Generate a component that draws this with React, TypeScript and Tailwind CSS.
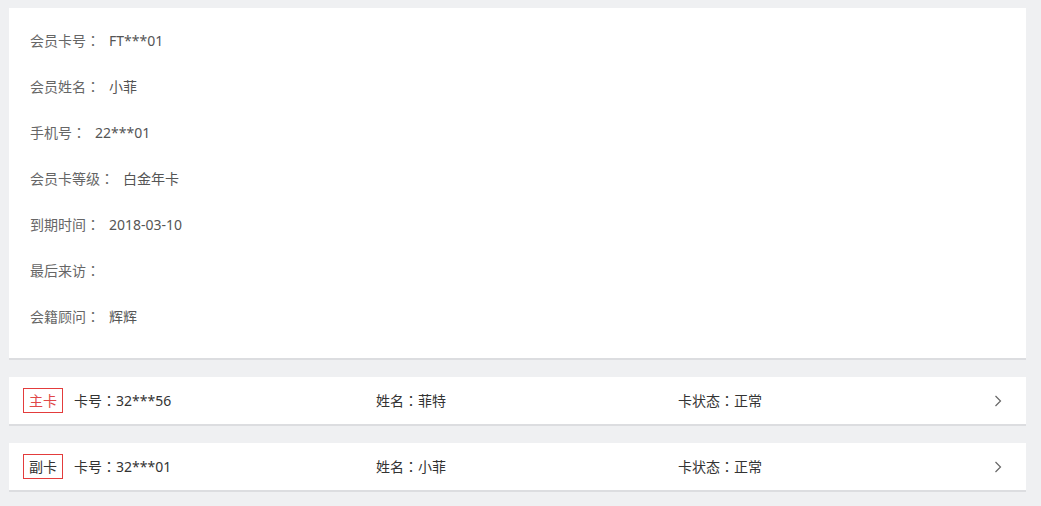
const info = [
  { label: "会员卡号", value: "FT***01" },
  { label: "会员姓名", value: "小菲" },
  { label: "手机号", value: "22***01" },
  { label: "会员卡等级", value: "白金年卡" },
  { label: "到期时间", value: "2018-03-10" },
  { label: "最后来访", value: "" },
  { label: "会籍顾问", value: "辉辉" },
];

const cards = [
  { type: "主卡", primary: true, no: "32***56", name: "菲特", status: "正常" },
  { type: "副卡", primary: false, no: "32***01", name: "小菲", status: "正常" },
];

// full-width colon, centered like the original font renders it
const Colon = () => <span style={{ fontFamily: '"Noto Sans CJK TC", sans-serif' }}>：</span>;

const Chevron = () => (
  <svg width="8" height="12" viewBox="0 0 8 12" className="text-[#666]">
    <polyline points="1.5,1 6.5,6 1.5,11" fill="none" stroke="currentColor" strokeWidth="1.2" />
  </svg>
);

export default function App() {
  return (
    <div
      className="min-h-[506px] w-[1041px] bg-[#eff0f2] pt-[8px] pl-[9px] pr-[15px] text-[14px]"
      style={{ fontFamily: '"Noto Sans", "Noto Sans CJK SC", sans-serif' }}
    >
      <div className="bg-white border-b-2 border-[#dcdde0] pl-[21px] pt-[9px] pb-[19px]">
        {info.map((row) => (
          <div key={row.label} className="flex h-[46px] items-center">
            <span className="text-[#666]">
              {row.label}
              <Colon />
            </span>
            <span className="ml-[9px] text-[#555]">{row.value}</span>
          </div>
        ))}
      </div>

      {cards.map((c) => (
        <div
          key={c.type}
          className="mt-[17px] flex h-[49px] items-center bg-white border-b-2 border-[#dcdde0] pl-[14px] pr-[24px] text-[#333]"
        >
          <span
            className={`flex h-[25px] items-center justify-center border border-[#e33c3c] px-[5px] leading-none ${
              c.primary ? "text-[#e04848]" : "text-[#333]"
            }`}
          >
            {c.type}
          </span>
          <span className="ml-[11px] w-[302px]">
            卡号<Colon />
            {c.no}
          </span>
          <span className="w-[302px]">
            姓名<Colon />
            {c.name}
          </span>
          <span className="flex-1">
            卡状态<Colon />
            {c.status}
          </span>
          <Chevron />
        </div>
      ))}
    </div>
  );
}
